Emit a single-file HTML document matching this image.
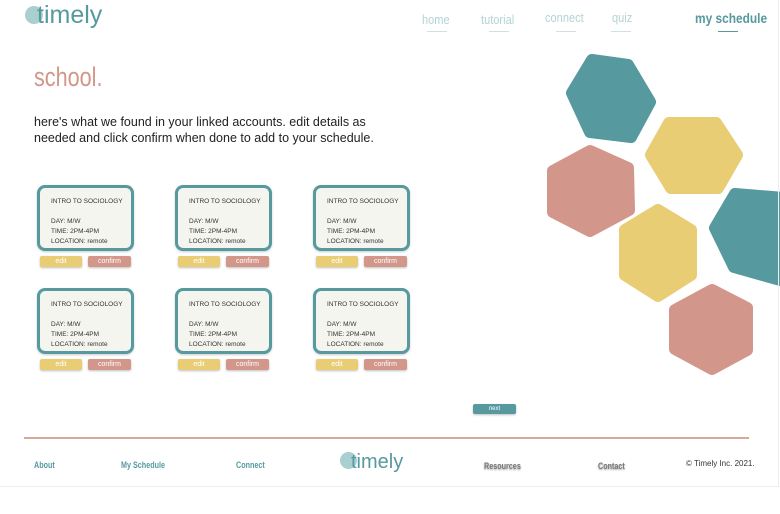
<!DOCTYPE html>
<html><head><meta charset="utf-8"><style>
*{margin:0;padding:0;box-sizing:border-box}
body{width:780px;height:514px;background:#fff;position:relative;overflow:hidden;font-family:"Liberation Sans",sans-serif}
.a{position:absolute}
.nav{font-family:"Liberation Sans Narrow","Liberation Sans",sans-serif;font-size:13px;color:#b4d3d5;transform:scaleX(.85);transform-origin:left}
.ul{height:1px;background:#cfe2e3}
.card{position:absolute;width:97px;height:66px;border:3px solid #56999f;border-radius:8px;background:#f5f5f0;font-size:6.5px;color:#333;padding:9px 0 0 11px;line-height:10px;box-shadow:0 1px 2px rgba(0,0,0,.2)}
.btn{position:absolute;height:11px;border-radius:2px;color:#fff;font-size:7px;text-align:center;line-height:11px;box-shadow:0 1px 2px rgba(0,0,0,.25)}
.e{background:#e8cd74;width:42px}.c{background:#d3968a;width:43px}
.f{font-size:9px;font-weight:bold;color:#56999f;transform:scaleX(.8);transform-origin:left}
</style></head><body>
<div class="a" style="left:25px;top:6px;width:18px;height:18px;border-radius:50%;background:#a9cfd1"></div>
<div class="a" style="left:37px;top:1px;font-size:25px;color:#56999f">timely</div>
<div class="a nav" style="left:422px;top:12px">home</div><div class="a ul" style="left:427px;top:31px;width:20px"></div>
<div class="a nav" style="left:481px;top:12px">tutorial</div><div class="a ul" style="left:489px;top:31px;width:20px"></div>
<div class="a nav" style="left:545px;top:10px">connect</div><div class="a ul" style="left:556px;top:31px;width:20px"></div>
<div class="a nav" style="left:612px;top:10px">quiz</div><div class="a ul" style="left:611px;top:31px;width:20px"></div>
<div class="a nav" style="left:695px;top:10px;color:#56999f;font-weight:bold;font-size:14px">my schedule</div><div class="a ul" style="left:718px;top:31px;width:20px;background:#56999f"></div>
<div class="a" style="left:34px;top:62px;font-size:27px;color:#d3968a;transform:scaleX(.8);transform-origin:left">school.</div>
<div class="a" style="left:34px;top:114px;font-size:12.5px;color:#222;line-height:16px;width:360px">here's what we found in your linked accounts. edit details as needed and click confirm when done to add to your schedule.</div>

<div class="card" style="left:37px;top:185px">INTRO TO SOCIOLOGY<br><br>DAY: M/W<br>TIME: 2PM-4PM<br>LOCATION: remote</div>
<div class="card" style="left:175px;top:185px">INTRO TO SOCIOLOGY<br><br>DAY: M/W<br>TIME: 2PM-4PM<br>LOCATION: remote</div>
<div class="card" style="left:313px;top:185px">INTRO TO SOCIOLOGY<br><br>DAY: M/W<br>TIME: 2PM-4PM<br>LOCATION: remote</div>
<div class="card" style="left:37px;top:288px">INTRO TO SOCIOLOGY<br><br>DAY: M/W<br>TIME: 2PM-4PM<br>LOCATION: remote</div>
<div class="card" style="left:175px;top:288px">INTRO TO SOCIOLOGY<br><br>DAY: M/W<br>TIME: 2PM-4PM<br>LOCATION: remote</div>
<div class="card" style="left:313px;top:288px">INTRO TO SOCIOLOGY<br><br>DAY: M/W<br>TIME: 2PM-4PM<br>LOCATION: remote</div>

<div class="btn e" style="left:40px;top:256px">edit</div><div class="btn c" style="left:88px;top:256px">confirm</div>
<div class="btn e" style="left:178px;top:256px">edit</div><div class="btn c" style="left:226px;top:256px">confirm</div>
<div class="btn e" style="left:316px;top:256px">edit</div><div class="btn c" style="left:364px;top:256px">confirm</div>
<div class="btn e" style="left:40px;top:359px">edit</div><div class="btn c" style="left:88px;top:359px">confirm</div>
<div class="btn e" style="left:178px;top:359px">edit</div><div class="btn c" style="left:226px;top:359px">confirm</div>
<div class="btn e" style="left:316px;top:359px">edit</div><div class="btn c" style="left:364px;top:359px">confirm</div>

<svg class="a" style="left:0;top:0" width="780" height="400" stroke-linejoin="round" stroke-width="12">
<polygon fill="#d3968a" stroke="#d3968a" points="590,151 628,168 629,210 590,231 553,212 553,171"/>
<polygon fill="#56999f" stroke="#56999f" points="592,60 628,65 650,102 631,137 590,132 572,93"/>
<polygon fill="#e8cd74" stroke="#e8cd74" points="669,123 716,123 737,155 718,188 671,188 651,155"/>
<polygon fill="#e8cd74" stroke="#e8cd74" points="658,210 691,230 691,275 658,296 625,275 625,230"/>
<polygon fill="#56999f" stroke="#56999f" points="735,194 784,198 784,281 734,267 715,228"/>
<polygon fill="#d3968a" stroke="#d3968a" points="712,290 747,308 747,350 712,369 675,349 675,310"/>
</svg>

<div class="btn" style="left:473px;top:404px;width:43px;height:10px;line-height:10px;background:#56999f;font-size:6px">next</div>
<div class="a" style="left:24px;top:437px;width:725px;height:2px;background:#d9a79c"></div>
<div class="a f" style="left:34px;top:460px">About</div>
<div class="a f" style="left:121px;top:460px">My Schedule</div>
<div class="a f" style="left:236px;top:460px">Connect</div>
<div class="a" style="left:340px;top:452px;width:17px;height:17px;border-radius:50%;background:#a9cfd1"></div>
<div class="a" style="left:351px;top:451px;font-size:20px;color:#56999f">timely</div>
<div class="a f" style="left:484px;top:461px;color:#777;text-shadow:0 1px 2px #999">Resources</div>
<div class="a f" style="left:598px;top:461px;color:#777;text-shadow:0 1px 2px #999">Contact</div>
<div class="a" style="left:686px;top:459px;font-size:8px;color:#333">© Timely Inc. 2021.</div>
<div class="a" style="left:0;top:486px;width:780px;height:1px;background:#eee"></div>
<div class="a" style="left:778px;top:0;width:1px;height:487px;background:#eee"></div>
</body></html>
